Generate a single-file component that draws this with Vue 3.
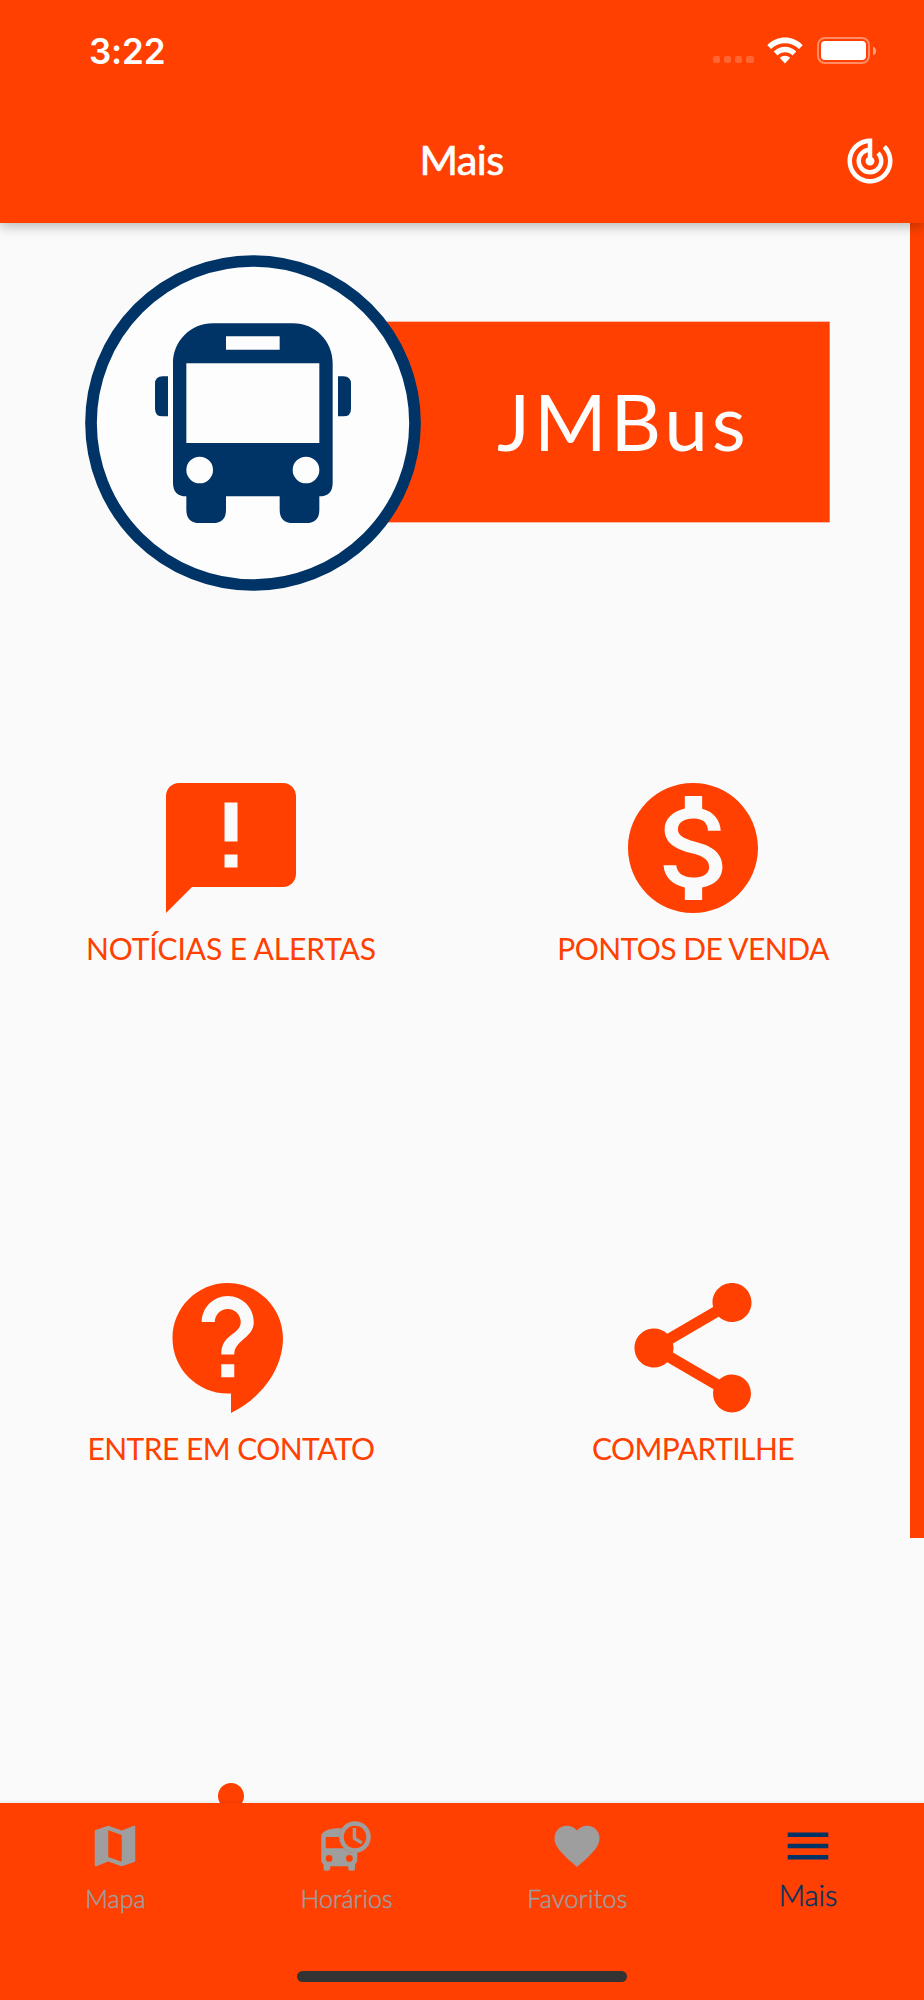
<template>
  <div class="app-shell">
    <header class="app-header">
      <div class="status-bar">
        <span class="status-bar__time">3:22</span>
        <div class="status-bar__icons">
          <div class="signal">
            <span v-for="n in 4" :key="n" class="signal__dot"></span>
          </div>
          <svg class="wifi" viewBox="0 0 36 27">
            <path d="M0.3 8.2C10-2 26-2 35.7 8.2L32 12C24.5 4.3 11.5 4.3 4 12Z" />
            <path d="M6.7 14.6C13 8.2 23 8.2 29.3 14.6L25.5 18.4C21.3 14.2 14.7 14.2 10.5 18.4Z" />
            <path d="M12.7 20.8C15.8 18 20.2 18 23.3 20.8L18 26.5Z" />
          </svg>
          <div class="battery">
            <div class="battery__body"><div class="battery__level"></div></div>
            <svg class="battery__tip" viewBox="0 0 4 10"><path d="M0 0C5 2 5 8 0 10Z" /></svg>
          </div>
        </div>
      </div>
      <div class="toolbar">
        <h1 class="toolbar__title">Mais</h1>
        <button class="toolbar__action" aria-label="Rastrear">
          <svg viewBox="0 0 24 24"><path :d="TRACK_ICON" /></svg>
        </button>
      </div>
    </header>

    <main class="content">
      <svg class="logo" viewBox="46 45 2234 1008">
        <rect class="logo__banner" x="550" y="245" width="1730" height="602" />
        <circle class="logo__ring" cx="550" cy="549" r="486" />
        <g class="logo__bus">
          <path
            fill-rule="evenodd"
            d="M430 250H670C736 250 789 303 789 370V728Q789 769 749 769V809Q749 849 709 849H670Q630 849 630 809V769H469V809Q469 849 429 849H390Q350 849 350 809V769Q310 769 310 728V370C310 303 363 250 430 250ZM469 289V329H630V289ZM350 370V609H749V370ZM430 690A40 40 0 1 0 350 690A40 40 0 1 0 430 690ZM749 690A40 40 0 1 0 669 690A40 40 0 1 0 749 690Z"
          />
          <path d="M295 409H279Q256 409 256 432V506Q256 529 279 529H295Z" />
          <path d="M805 409H821Q844 409 844 432V506Q844 529 821 529H805Z" />
        </g>
        <text class="logo__name" x="1282" y="633" textLength="746" lengthAdjust="spacing">JMBus</text>
      </svg>

      <div class="menu-grid">
        <button v-for="item in menuItems" :key="item.id" class="menu-item">
          <svg class="menu-item__icon" viewBox="0 0 24 24"><path :d="item.icon" /></svg>
          <span class="menu-item__label" :class="item.id">{{ item.label }}</span>
        </button>
      </div>
      <div class="scroll-thumb"></div>
    </main>

    <nav class="tab-bar">
      <div class="tab-bar__items">
        <button
          v-for="tab in tabs"
          :key="tab.id"
          class="tab"
          :class="[tab.id, { active: tab.id === activeTab }]"
          @click="activeTab = tab.id"
        >
          <svg class="tab__icon" viewBox="0 0 24 24"><path fill-rule="evenodd" :d="tab.icon" /></svg>
          <span class="tab__label">{{ tab.label }}</span>
        </button>
      </div>
      <div class="home-indicator"></div>
    </nav>
  </div>
</template>

<script setup>
import { ref } from 'vue'

const TRACK_ICON =
  'M19.07 4.93l-1.41 1.41C19.1 7.79 20 9.79 20 12c0 4.42-3.58 8-8 8s-8-3.58-8-8c0-4.08 3.05-7.44 7-7.93v2.02C8.16 6.57 6 9.03 6 12c0 3.31 2.69 6 6 6s6-2.69 6-6c0-1.66-.67-3.16-1.76-4.24l-1.41 1.41C15.55 9.9 16 10.9 16 12c0 2.21-1.79 4-4 4s-4-1.79-4-4c0-1.86 1.28-3.41 3-3.86v2.14c-.6.35-1 .98-1 1.72 0 1.1.9 2 2 2s2-.9 2-2c0-.74-.4-1.38-1-1.72V2h-1C6.48 2 2 6.48 2 12s4.48 10 10 10 10-4.48 10-10c0-2.76-1.12-5.26-2.93-7.07z'

const menuItems = [
  {
    id: 'noticias',
    label: 'NOTÍCIAS E ALERTAS',
    icon: 'M20 2H4c-1.1 0-2 .9-2 2v18l4-4h14c1.1 0 2-.9 2-2V4c0-1.1-.9-2-2-2zm-7 9h-2V5h2v6zm0 4h-2v-2h2v2z',
  },
  {
    id: 'pontos',
    label: 'PONTOS DE VENDA',
    icon: 'M12 2C6.48 2 2 6.48 2 12s4.48 10 10 10 10-4.48 10-10S17.52 2 12 2zm1.41 16.09V20h-2.67v-1.93c-1.71-.36-3.16-1.46-3.27-3.4h1.96c.1 1.05.82 1.87 2.65 1.87 1.96 0 2.4-.98 2.4-1.59 0-.83-.44-1.61-2.67-2.14-2.48-.6-4.18-1.62-4.18-3.67 0-1.72 1.39-2.84 3.11-3.21V4h2.67v1.95c1.86.45 2.79 1.86 2.85 3.39H14.3c-.05-1.11-.64-1.87-2.22-1.87-1.5 0-2.4.68-2.4 1.64 0 .84.65 1.39 2.67 1.91s4.18 1.39 4.18 3.91c-.01 1.83-1.38 2.83-3.12 3.16z',
  },
  {
    id: 'contato',
    label: 'ENTRE EM CONTATO',
    icon: 'M11.5 2C6.81 2 3 5.81 3 10.5S6.81 19 11.5 19h.5v3c4.86-2.34 8-7 8-11.5C20 5.81 16.19 2 11.5 2zm1 14.5h-2v-2h2v2zm0-3.5h-2c0-3.25 3-3 3-5 0-1.1-.9-2-2-2s-2 .9-2 2h-2c0-2.21 1.79-4 4-4s4 1.79 4 4c0 2.5-3 2.75-3 5z',
  },
  {
    id: 'compartilhe',
    label: 'COMPARTILHE',
    icon: 'M18 16.08c-.76 0-1.44.3-1.96.77L8.91 12.7c.05-.23.09-.46.09-.7s-.04-.47-.09-.7l7.05-4.11c.54.5 1.25.81 2.04.81 1.66 0 3-1.34 3-3s-1.34-3-3-3-3 1.34-3 3c0 .24.04.47.09.7L8.04 9.81C7.5 9.31 6.79 9 6 9c-1.66 0-3 1.34-3 3s1.34 3 3 3c.79 0 1.5-.31 2.04-.81l7.12 4.16c-.05.21-.08.43-.08.65 0 1.61 1.31 2.92 2.92 2.92s2.92-1.31 2.92-2.92-1.31-2.92-2.92-2.92z',
  },
  {
    id: 'acessibilidade',
    label: '',
    icon: 'M12 2c1.1 0 2 .9 2 2s-.9 2-2 2-2-.9-2-2 .9-2 2-2zm9 7h-6v13h-2v-6h-2v6H9V9H3V7h18v2z',
  },
]

const tabs = [
  {
    id: 'mapa',
    label: 'Mapa',
    icon: 'M20.5 3l-.16.03L15 5.1 9 3 3.36 4.9c-.21.07-.36.25-.36.48V20.5c0 .28.22.5.5.5l.16-.03L9 18.9l6 2.1 5.64-1.9c.21-.07.36-.25.36-.48V3.5c0-.28-.22-.5-.5-.5zM15 19l-6-2.11V5l6 2.11V19z',
  },
  {
    id: 'horarios',
    label: 'Horários',
    icon: 'M10.2 4.1C5 4 1 5 1 8v10c0 .88.39 1.67 1 2.22V22a1 1 0 0 0 1 1h1a1 1 0 0 0 1-1v-1h8v1a1 1 0 0 0 1 1h1a1 1 0 0 0 1-1v-1.78c.61-.55 1-1.34 1-2.22v-3.07A7 7 0 0 1 10.2 4.1zM3 8h6a7 7 0 0 0 2.1 5H3zM4.5 16a1.5 1.5 0 1 1 0 3 1.5 1.5 0 0 1 0-3zM13.5 16a1.5 1.5 0 1 1 0 3 1.5 1.5 0 0 1 0-3zM16 1a7 7 0 1 1 0 14 7 7 0 0 1 0-14zM16 3a5 5 0 1 0 0 10 5 5 0 0 0 0-10zM15 4v5l3.6 2.2.8-1.2-2.9-1.8V4z',
  },
  {
    id: 'favoritos',
    label: 'Favoritos',
    icon: 'M12 21.35l-1.45-1.32C5.4 15.36 2 12.28 2 8.5 2 5.42 4.42 3 7.5 3c1.74 0 3.41.81 4.5 2.09C13.09 3.81 14.76 3 16.5 3 19.58 3 22 5.42 22 8.5c0 3.78-3.4 6.86-8.55 11.54L12 21.35z',
  },
  {
    id: 'mais',
    label: 'Mais',
    icon: 'M3 18h18v-2H3v2zm0-5h18v-2H3v2zm0-7v2h18V6H3z',
  },
]

const activeTab = ref('mais')
</script>

<style>
body {
  margin: 0;
  background: #fafafa;
}
</style>

<style scoped>
.app-shell {
  display: flex;
  flex-direction: column;
  height: 2000px;
  overflow: hidden;
  background: #fafafa;
  font-family: Lato, 'Noto Sans', sans-serif;
}

button {
  border: none;
  background: none;
  padding: 0;
  font: inherit;
  color: inherit;
  cursor: pointer;
}

svg {
  display: block;
  fill: currentColor;
}

.app-header {
  flex: 0 0 223px;
  background: #ff4000;
  color: #fff;
  box-shadow: 0 3px 12px rgba(0, 0, 0, 0.28);
  z-index: 2;
}

.status-bar {
  display: flex;
  justify-content: space-between;
  align-items: center;
  height: 101px;
  padding: 0 48px 0 89px;
}

.status-bar__time {
  font-family: Inter, sans-serif;
  font-size: 35px;
  font-weight: 600;
  letter-spacing: -0.2px;
}

.status-bar__icons {
  display: flex;
  align-items: center;
}

.signal {
  display: flex;
  gap: 3.5px;
  padding-top: 18px;
  margin-right: 13.5px;
}

.signal__dot {
  width: 7.6px;
  height: 7.6px;
  border-radius: 2px;
  background: rgba(255, 255, 255, 0.2);
}

.wifi {
  width: 36px;
  height: 27px;
  margin-right: 14px;
}

.battery {
  display: flex;
  align-items: center;
  gap: 2.5px;
}

.battery__body {
  box-sizing: border-box;
  width: 53px;
  height: 27px;
  padding: 2px;
  border: 2px solid rgba(255, 255, 255, 0.4);
  border-radius: 8px;
}

.battery__level {
  height: 100%;
  border-radius: 4px;
  background: #fff;
}

.battery__tip {
  width: 3.5px;
  height: 10px;
  opacity: 0.5;
}

.toolbar {
  display: grid;
  grid-template-columns: 1fr auto 1fr;
  align-items: center;
  height: 120px;
  padding: 0 27px 0 26px;
}

.toolbar__title {
  grid-column: 2;
  margin: 0;
  padding-bottom: 5px;
  font-size: 41.5px;
  font-weight: 400;
  letter-spacing: -0.6px;
  -webkit-text-stroke: 0.7px currentColor;
}

.toolbar__action {
  justify-self: end;
}

.toolbar__action svg {
  width: 54px;
  height: 54px;
}

.content {
  position: relative;
  flex: 1;
  min-height: 0;
  overflow: hidden;
  padding-top: 32px;
}

.logo {
  width: 744.7px;
  height: 336px;
  margin-left: 85.3px;
}

.logo__banner {
  fill: #ff4000;
}

.logo__ring {
  fill: #fdfdfd;
  stroke: #003366;
  stroke-width: 35px;
}

.logo__bus {
  fill: #003366;
}

.logo__name {
  fill: #fdfdfd;
  font-family: Lato, sans-serif;
  font-size: 235px;
}

.menu-grid {
  display: grid;
  grid-template-columns: repeat(2, 1fr);
  grid-auto-rows: 500px;
  margin-top: 33px;
  color: #ff4000;
}

.menu-item {
  display: flex;
  flex-direction: column;
  align-items: center;
  justify-content: center;
}

.menu-item__icon {
  width: 156px;
  height: 156px;
}

.menu-item__label {
  height: 52px;
  font-size: 30px;
  line-height: 44px;
  white-space: nowrap;
}

.menu-item__label.noticias {
  letter-spacing: -0.12px;
}

.menu-item__label.pontos,
.menu-item__label.contato,
.menu-item__label.compartilhe {
  letter-spacing: -0.54px;
}

.scroll-thumb {
  position: absolute;
  top: 0;
  right: 0;
  width: 14px;
  height: 1314.5px;
  background: #ff4000;
}

.tab-bar {
  display: flex;
  flex-direction: column;
  justify-content: space-between;
  align-items: center;
  flex: 0 0 197px;
  background: #ff4000;
  box-shadow: 0 -1px 4px rgba(0, 0, 0, 0.08);
  z-index: 2;
}

.tab-bar__items {
  display: grid;
  grid-template-columns: repeat(4, 1fr);
  width: 100%;
  padding-top: 16px;
}

.tab {
  display: flex;
  flex-direction: column;
  align-items: center;
  color: #9e9e9e;
}

.tab__icon {
  width: 54px;
  height: 54px;
  margin-right: 1px;
}

.tab__label {
  font-size: 25px;
  font-weight: 300;
  line-height: 30px;
  margin-top: 10px;
  -webkit-text-stroke: 0.5px currentColor;
}

.tab.favoritos .tab__label {
  letter-spacing: 0.3px;
}

.tab.active {
  color: #003366;
}

.tab.active .tab__label {
  font-size: 29px;
  margin-top: 7px;
  margin-right: 1px;
}

.home-indicator {
  width: 330px;
  height: 11px;
  margin-bottom: 18px;
  border-radius: 6px;
  background: #333;
}
</style>
